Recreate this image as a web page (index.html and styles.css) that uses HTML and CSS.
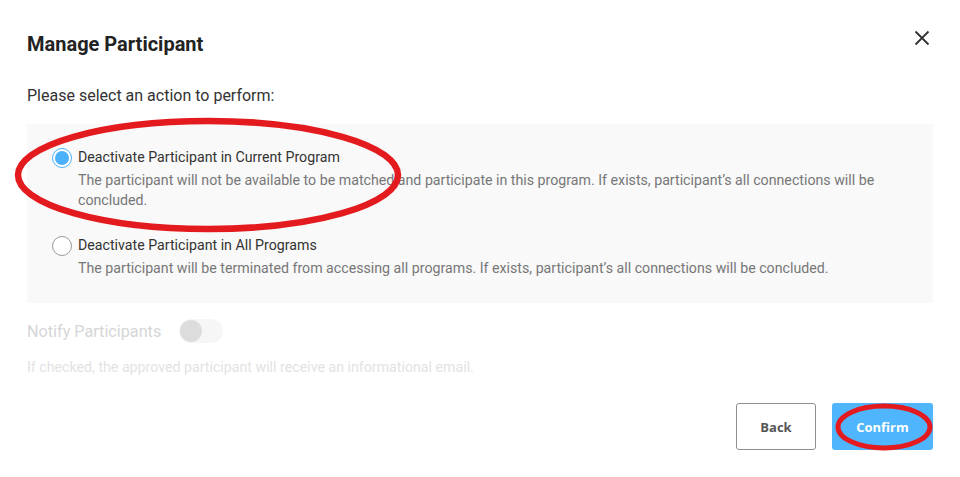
FILE: index.html
```html
<!DOCTYPE html>
<html lang="en">
<head>
    <meta charset="UTF-8">
    <meta name="viewport" content="width=device-width, initial-scale=1.0">
    <title>Manage Participant</title>
    <link rel="stylesheet" href="styles.css">
</head>
<body>
    <div class="modal">
        <div class="modal-header">
            <h2>Manage Participant</h2>
            <button class="close-btn" aria-label="Close">
                <svg width="16" height="16" viewBox="0 0 16 16">
                    <path d="M1.5 1.5 L14.5 14.5 M14.5 1.5 L1.5 14.5" stroke="#333" stroke-width="1.8" fill="none"/>
                </svg>
            </button>
        </div>

        <p class="intro">Please select an action to perform:</p>

        <div class="options">
            <label class="option">
                <span class="radio checked"></span>
                <span class="option-text">
                    <span class="option-title">Deactivate Participant in Current Program</span>
                    <span class="option-desc">The participant will not be available to be matched and participate in this program. If exists, participant’s all connections will be concluded.</span>
                </span>
            </label>
            <label class="option">
                <span class="radio"></span>
                <span class="option-text">
                    <span class="option-title">Deactivate Participant in All Programs</span>
                    <span class="option-desc">The participant will be terminated from accessing all programs. If exists, participant’s all connections will be concluded.</span>
                </span>
            </label>
        </div>

        <div class="notify">
            <span class="notify-label">Notify Participants</span>
            <span class="toggle"><span class="knob"></span></span>
        </div>
        <p class="hint">If checked, the approved participant will receive an informational email.</p>

        <div class="actions">
            <button class="btn btn-back">Back</button>
            <button class="btn btn-confirm">Confirm</button>
        </div>
    </div>

    <!-- annotation marks drawn over the dialog -->
    <svg class="marks" width="960" height="477" viewBox="0 0 960 477">
        <ellipse cx="208" cy="175" rx="190" ry="54" fill="none" stroke="#e41b1e" stroke-width="6.5"/>
        <ellipse cx="884" cy="427" rx="46" ry="21" fill="none" stroke="#e41b1e" stroke-width="5"/>
    </svg>
</body>
</html>
```

FILE: styles.css
```css
/* General */
body {
    margin: 0;
    font-family: Roboto, "Noto Sans", Arial, sans-serif;
    background: #fff;
    color: #333;
}
.modal {
    padding: 30px 27px 0;
}

/* Header */
.modal-header {
    display: flex;
    justify-content: space-between;
    align-items: center;
}
.modal-header h2 {
    margin: 0;
    font-size: 20px;
    line-height: 28px;
    font-weight: 700;
    color: #222;
}
.close-btn {
    background: none;
    border: none;
    padding: 0;
    margin-right: 3px;
    margin-top: -12px;
    width: 16px;
    height: 16px;
    cursor: pointer;
}

.intro {
    margin: 27px 0 0;
    font-size: 16px;
    line-height: 22px;
    color: #333;
}

/* Options */
.options {
    margin-top: 17px;
    background: #f9f9f9;
    padding: 23px 25px 25px 25px;
}
.option {
    display: flex;
    gap: 6px;
    cursor: pointer;
}
.option + .option {
    margin-top: 25px;
}
.radio {
    flex: none;
    box-sizing: border-box;
    width: 20px;
    height: 20px;
    border-radius: 50%;
    border: 1px solid #9a9a9a;
    background: #fff;
    position: relative;
    top: 1px;
}
.radio.checked {
    border-color: #4cb1fb;
}
.radio.checked::after {
    content: "";
    position: absolute;
    left: 2px;
    top: 2px;
    width: 14px;
    height: 14px;
    border-radius: 50%;
    background: #4cb1fb;
}
.option-text {
    display: flex;
    flex-direction: column;
}
.option-title {
    font-size: 14.2px;
    line-height: 20px;
    color: #333;
}
.option-desc {
    margin-top: 3px;
    font-size: 14.2px;
    line-height: 20px;
    color: #777;
}

/* Notify */
.notify {
    margin-top: 16px;
    display: flex;
    align-items: center;
    gap: 18px;
}
.notify-label {
    font-size: 16.2px;
    color: #d6d6d6;
}
.toggle {
    width: 44px;
    height: 24px;
    border-radius: 12px;
    background: #f6f6f6;
    display: flex;
    align-items: center;
    padding-left: 1px;
    box-sizing: border-box;
}
.knob {
    width: 22px;
    height: 22px;
    border-radius: 50%;
    background: #dcdcdc;
}
.hint {
    margin: 14px 0 0;
    font-size: 14.2px;
    line-height: 20px;
    color: #e3e3e3;
}

/* Buttons */
.actions {
    margin-top: 26px;
    display: flex;
    justify-content: flex-end;
    gap: 16px;
}
.btn {
    height: 47px;
    border-radius: 3px;
    font-family: "Open Sans", Roboto, sans-serif;
    font-size: 13px;
    font-weight: 700;
    cursor: pointer;
}
.btn-back {
    width: 80px;
    background: #fff;
    border: 1px solid #8f8f8f;
    color: #555;
}
.btn-confirm {
    width: 101px;
    background: #4fb5fd;
    border: none;
    color: #fff;
}

/* Annotation overlay */
.marks {
    position: absolute;
    left: 0;
    top: 0;
    pointer-events: none;
}
```
